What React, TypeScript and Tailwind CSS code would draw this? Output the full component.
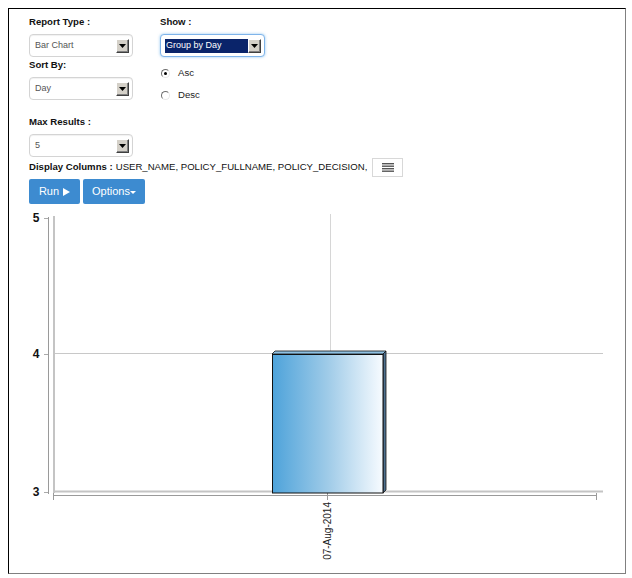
import React from "react";

const FONT = "font-['Liberation_Sans',Arial,sans-serif]";

function ClassicSelect({ value, focused }: { value: string; focused?: boolean }) {
  return (
    <div
      className={
        "flex h-[23px] items-center rounded-[4px] border bg-white pl-[4px] pr-[3px] " +
        (focused
          ? "w-[105px] border-[#7fb4ea] shadow-[0_0_3px_rgba(102,175,233,0.7)]"
          : "w-[104px] border-[#d4d4d4] shadow-[inset_0_1px_1px_rgba(0,0,0,0.06)]")
      }
    >
      <div
        className={
          "flex h-[14px] flex-1 items-center pl-[1px] text-[9px] " +
          (focused ? "bg-[#0a246a] text-white" : "text-[#555]")
        }
      >
        {value}
      </div>
      <div className="flex h-[14px] w-[13px] items-center justify-center border border-t-white border-l-white border-r-[#404040] border-b-[#404040] bg-[#d4d0c8] shadow-[inset_-1px_-1px_0_#808080]">
        <svg width="7" height="4" viewBox="0 0 7 4">
          <path d="M0 0h7L3.5 4z" fill="#000" />
        </svg>
      </div>
    </div>
  );
}

function Radio({ checked, label }: { checked?: boolean; label: string }) {
  return (
    <div className="flex h-[14px] items-center">
      <div className="ml-[1px] flex h-[9px] w-[9px] items-center justify-center rounded-full border border-t-[#6e6e6e] border-l-[#6e6e6e] border-r-[#e8e8e8] border-b-[#e8e8e8] bg-white">
        {checked && <div className="h-[3px] w-[3px] rounded-full bg-black" />}
      </div>
      <span className="ml-[8px] text-[9.6px] text-[#222]">{label}</span>
    </div>
  );
}

function Chart() {
  // coordinates are relative to the frame's inner box (page x - 9, page y - 205)
  const ox = 9;
  const oy = 205;
  const X = (v: number) => v - ox;
  const Y = (v: number) => v - oy;
  return (
    <svg width="616" height="364" className="mt-[2px] block">
      <defs>
        <linearGradient id="barFill" x1="0" x2="1" y1="0" y2="0">
          <stop offset="0" stopColor="#4ea3da" />
          <stop offset="0.5" stopColor="#9fcbe8" />
          <stop offset="1" stopColor="#f7fbff" />
        </linearGradient>
      </defs>
      {/* grid */}
      <line x1={X(330.5)} y1={Y(213)} x2={X(330.5)} y2={Y(491)} stroke="#d6d6d6" />
      <line x1={X(55)} y1={Y(352.5)} x2={X(603)} y2={Y(352.5)} stroke="#c8c8c8" />
      {/* y axis */}
      <line x1={X(48.5)} y1={Y(216)} x2={X(48.5)} y2={Y(493)} stroke="#9a9a9a" />
      <line x1={X(54)} y1={Y(215)} x2={X(54)} y2={Y(492)} stroke="#c4c4c4" strokeWidth="2" />
      {[217.5, 353.5, 491.5].map((y) => (
        <line key={y} x1={X(44)} y1={Y(y)} x2={X(48)} y2={Y(y)} stroke="#aaa" />
      ))}
      {[
        ["5", 221],
        ["4", 357],
        ["3", 495],
      ].map(([t, y]) => (
        <text
          key={t}
          x={X(36)}
          y={Y(y as number)}
          textAnchor="middle"
          fontFamily="'Liberation Sans', Arial, sans-serif"
          fontWeight="bold"
          fontSize="12"
          fill="#111"
        >
          {t}
        </text>
      ))}
      {/* x axis */}
      <line x1={X(55)} y1={Y(490.5)} x2={X(603)} y2={Y(490.5)} stroke="#c4c4c4" strokeWidth="2" />
      <line x1={X(53)} y1={Y(494.5)} x2={X(597)} y2={Y(494.5)} stroke="#9a9a9a" />
      {[53.5, 327.5, 596.5].map((x) => (
        <line key={x} x1={X(x)} y1={Y(492)} x2={X(x)} y2={Y(499)} stroke="#9a9a9a" />
      ))}
      {/* bar (3d) */}
      <polygon
        points={`${X(272)},${Y(353)} ${X(275)},${Y(350)} ${X(386)},${Y(350)} ${X(383)},${Y(353)}`}
        fill="#8ec0e2"
        stroke="#111"
        strokeWidth="0.8"
      />
      <polygon
        points={`${X(383)},${Y(353)} ${X(386)},${Y(350)} ${X(386)},${Y(489)} ${X(383)},${Y(492)}`}
        fill="#4d6f8e"
        stroke="#111"
        strokeWidth="0.8"
      />
      <rect
        x={X(272.5)}
        y={Y(353.5)}
        width={110.5}
        height={138.5}
        fill="url(#barFill)"
        stroke="#111"
        strokeWidth="1"
      />
      {/* x label */}
      <text
        transform={`translate(${X(331)}, ${Y(501)}) rotate(-90)`}
        textAnchor="end"
        fontFamily="'Liberation Sans', Arial, sans-serif"
        fontSize="10"
        fill="#222"
      >
        07-Aug-2014
      </text>
    </svg>
  );
}

export default function App() {
  return (
    <div className={"h-[578px] w-[632px] bg-white pl-[8px] pt-[8px] " + FONT}>
      <div className="h-[566px] w-[618px] border border-t-black border-l-black border-r-[#808080] border-b-[#808080] bg-white">
        <div className="pl-[20px] text-[#111]">
          <div className="flex">
            <div className="w-[131px]">
              <div className="mt-[7px] h-[12px] text-[9.6px] font-bold leading-[12px]">Report Type :</div>
              <div className="mt-[6px]">
                <ClassicSelect value="Bar Chart" />
              </div>
              <div className="mt-[2px] h-[12px] text-[9.6px] font-bold leading-[12px]">Sort By:</div>
              <div className="mt-[6px]">
                <ClassicSelect value="Day" />
              </div>
            </div>
            <div>
              <div className="mt-[7px] h-[12px] text-[9.6px] font-bold leading-[12px]">Show :</div>
              <div className="mt-[6px]">
                <ClassicSelect value="Group by Day" focused />
              </div>
              <div className="mt-[9px]">
                <Radio checked label="Asc" />
              </div>
              <div className="mt-[8px]">
                <Radio label="Desc" />
              </div>
            </div>
          </div>
          <div className="mt-[14px] h-[12px] text-[9.6px] font-bold leading-[12px]">Max Results :</div>
          <div className="mt-[6px]">
            <ClassicSelect value="5" />
          </div>
          <div className="mt-[1px] flex h-[19px] items-center text-[9.6px]">
            <span className="font-bold">Display Columns :</span>
            <span className="ml-[3px]">USER_NAME, POLICY_FULLNAME, POLICY_DECISION,</span>
            <button className="ml-[5px] flex h-[19px] w-[31px] items-center justify-center border border-[#d8d8d8] bg-white">
              <svg width="12" height="9" viewBox="0 0 12 9">
                <rect y="0" width="12" height="1.4" fill="#555" />
                <rect y="2.5" width="12" height="1.4" fill="#555" />
                <rect y="5" width="12" height="1.4" fill="#555" />
                <rect y="7.5" width="12" height="1.4" fill="#555" />
              </svg>
            </button>
          </div>
          <div className="mt-[2px] flex gap-[3px]">
            <button className="flex h-[25px] w-[51px] items-center justify-center gap-[4px] rounded-[2px] bg-[#3d8bd0] text-[11px] text-white">
              Run
              <svg width="7" height="8" viewBox="0 0 7 8">
                <path d="M0 0l7 4-7 4z" fill="#fff" />
              </svg>
            </button>
            <button className="flex h-[25px] w-[62px] items-center justify-center rounded-[2px] bg-[#3d8bd0] text-[11px] text-white">
              Options
              <svg width="6" height="4" viewBox="0 0 6 4" className="mt-[2px]">
                <path d="M0 0h6L3 3z" fill="#fff" />
              </svg>
            </button>
          </div>
        </div>
        <Chart />
      </div>
    </div>
  );
}
